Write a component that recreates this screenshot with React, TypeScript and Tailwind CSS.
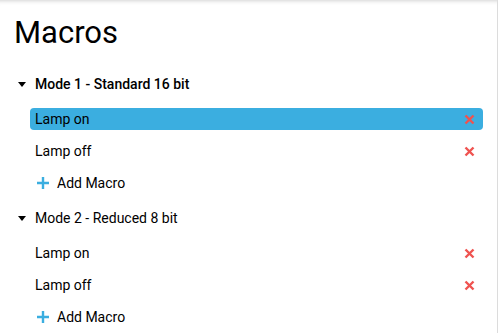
import { useState } from "react";

type Macro = { id: number; name: string };
type Mode = { id: number; name: string; macros: Macro[] };

const modes: Mode[] = [
  {
    id: 1,
    name: "Mode 1 - Standard 16 bit",
    macros: [
      { id: 1, name: "Lamp on" },
      { id: 2, name: "Lamp off" },
    ],
  },
  {
    id: 2,
    name: "Mode 2 - Reduced 8 bit",
    macros: [
      { id: 3, name: "Lamp on" },
      { id: 4, name: "Lamp off" },
    ],
  },
];

function CloseIcon() {
  return (
    <svg width="11" height="11" viewBox="0 0 11 11" className="shrink-0">
      <path d="M1.5 1.5 L9.5 9.5 M9.5 1.5 L1.5 9.5" stroke="#ef5350" strokeWidth="2.4" strokeLinecap="butt" />
    </svg>
  );
}

function PlusIcon() {
  return (
    <svg width="12" height="12" viewBox="0 0 12 12" className="shrink-0">
      <path d="M6 0 V12 M0 6 H12" stroke="#3baee0" strokeWidth="2.4" />
    </svg>
  );
}

export default function App() {
  const [selected, setSelected] = useState(1);

  return (
    <div className="h-[333px] w-full overflow-hidden border-r border-[#dcdcdc] bg-white text-black shadow-[inset_0_5px_5px_-5px_rgba(0,0,0,0.25)] [font-family:Roboto,'Liberation_Sans',sans-serif]">
      <h1 className="pl-[14px] pt-[17px] text-[31px] leading-8 font-normal">Macros</h1>
      <div className="mt-4 flex flex-col">
        {modes.map((mode) => (
          <div key={mode.id} className="flex flex-col">
            <div className="flex h-[38px] items-center">
              <svg width="8" height="5" viewBox="0 0 8 5" className="ml-[18px] mr-[9px]">
                <path d="M0 0 H8 L4 5 Z" fill="#000" />
              </svg>
              <span className={mode.id === 1 ? "text-[14px] font-medium" : "text-[14px]"}>{mode.name}</span>
            </div>
            {mode.macros.map((macro) => (
              <div key={macro.id} className="flex h-8 items-center pl-[30px] pr-[14px]" onClick={() => setSelected(macro.id)}>
                <div
                  className={
                    macro.id === selected
                      ? "flex h-[22px] flex-1 items-center justify-between rounded bg-[#3baee0] pl-[5px] pr-[8px]"
                      : "flex h-[22px] flex-1 items-center justify-between pl-[5px] pr-[8px]"
                  }
                >
                  <span className="text-[14px]">{macro.name}</span>
                  <CloseIcon />
                </div>
              </div>
            ))}
            <div className="flex h-8 items-center pl-[37px]">
              <PlusIcon />
              <span className="ml-2 text-[14px]">Add Macro</span>
            </div>
          </div>
        ))}
      </div>
    </div>
  );
}
